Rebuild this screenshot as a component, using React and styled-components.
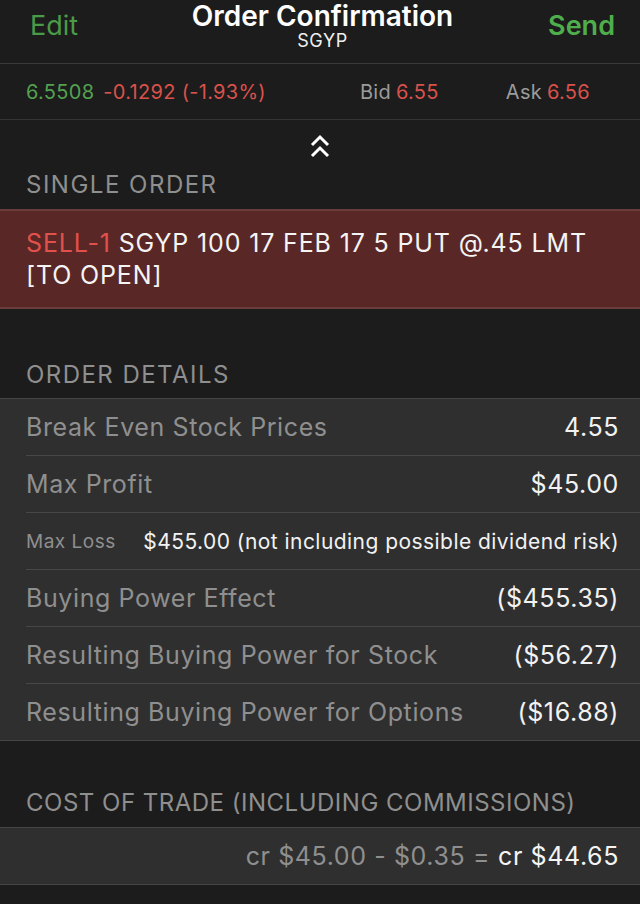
import React from 'react'
import styled, { createGlobalStyle } from 'styled-components'

const GlobalStyle = createGlobalStyle`
    html, body {
        margin: 0;
        padding: 0;
        background: #1c1c1c;
    }
    body {
        font-family: Inter, Roboto, "Liberation Sans", sans-serif;
        -webkit-font-smoothing: antialiased;
    }
`

const Screen = styled.div`
    width: 640px;
    min-height: 904px;
    background: #1c1c1c;
    color: #f2f2f2;
    overflow: hidden;
`

const NavBar = styled.div`
    height: 63px;
    display: grid;
    grid-template-columns: 1fr auto 1fr;
    align-items: start;
    padding: 0 25px 0 30px;
    border-bottom: 1px solid #3a3a3a;
`
const NavButton = styled.div`
    margin-top: 9px;
    font-size: 27px;
    font-weight: ${({ bold }) => (bold ? 600 : 400)};
    color: ${({ bold }) => (bold ? '#4fae4c' : '#4b9a48')};
    text-align: ${({ bold }) => (bold ? 'right' : 'left')};
`
const TitleBlock = styled.div`
    display: flex;
    flex-direction: column;
    align-items: center;
    padding-top: 1px;
`
const Title = styled.div`
    font-size: 28px;
    font-weight: 600;
    color: #ffffff;
    line-height: 30px;
`
const Subtitle = styled.div`
    font-size: 18px;
    color: #f0f0f0;
    line-height: 20px;
    letter-spacing: 0.6px;
`

const QuoteBar = styled.div`
    height: 55px;
    display: flex;
    align-items: center;
    padding: 0 50px 0 26px;
    font-size: 20px;
    letter-spacing: 0.3px;
    border-bottom: 1px solid #333;
`
const Last = styled.span`
    color: #53a150;
    margin-right: 9px;
`
const Change = styled.span`
    color: #d9514b;
    flex: 1;
`
const Quote = styled.span`
    color: #9b9b9b;
    margin-left: ${({ gap }) => gap || 0}px;
    span {
        color: #d9514b;
        margin-left: 5px;
    }
`

const Collapse = styled.div`
    display: flex;
    justify-content: center;
    padding-top: 14px;
    height: 25px;
`

const SectionTitle = styled.div`
    font-size: 24px;
    color: #8f8f8f;
    padding: ${({ top }) => top}px 26px ${({ bottom }) => bottom}px;
    line-height: 30px;
    letter-spacing: ${({ tracking }) => tracking}px;
`

const OrderBox = styled.div`
    background: #5a2727;
    border-top: 2px solid #6b3c3c;
    border-bottom: 2px solid #6b3c3c;
    padding: 16px 26px;
    font-size: 25px;
    line-height: 32px;
    letter-spacing: 0.85px;
    color: #f4f4f4;
`
const Sell = styled.span`
    color: #e0514b;
`

const Card = styled.div`
    background: #2f2f2f;
    border-top: 1px solid #454545;
    border-bottom: 1px solid #454545;
`
const Row = styled.div`
    height: 56px;
    display: flex;
    align-items: center;
    justify-content: space-between;
    margin-left: 26px;
    padding-right: 21px;
    border-bottom: ${({ last }) => (last ? 'none' : '1px solid #474747')};
`
const Label = styled.div`
    font-size: ${({ small }) => (small ? 19 : 25)}px;
    letter-spacing: ${({ small }) => (small ? 0.5 : 0.6)}px;
    color: #8f8f8f;
`
const Value = styled.div`
    font-size: ${({ small }) => (small ? 21 : 25)}px;
    letter-spacing: ${({ small }) => (small ? 0.45 : 0.6)}px;
    color: #f2f2f2;
`

const CostRow = styled.div`
    height: 56px;
    display: flex;
    align-items: center;
    justify-content: flex-end;
    padding-right: 21px;
    font-size: 25px;
    letter-spacing: 0.6px;
    background: #2f2f2f;
    border-top: 1px solid #454545;
    border-bottom: 1px solid #454545;
    color: #8f8f8f;
    span {
        color: #f4f4f4;
        margin-left: 8px;
    }
`

const details = [
    { label: 'Break Even Stock Prices', value: '4.55' },
    { label: 'Max Profit', value: '$45.00' },
    { label: 'Max Loss', value: '$455.00 (not including possible dividend risk)', small: true },
    { label: 'Buying Power Effect', value: '($455.35)' },
    { label: 'Resulting Buying Power for Stock', value: '($56.27)' },
    { label: 'Resulting Buying Power for Options', value: '($16.88)' },
]

const DoubleChevron = () => (
    <svg width="22" height="26" viewBox="0 0 22 26">
        <path d="M3 11 L11 3 L19 11" fill="none" stroke="#fff" strokeWidth="3" />
        <path d="M3 22 L11 14 L19 22" fill="none" stroke="#fff" strokeWidth="3" />
    </svg>
)

const App = () => {
    return (
        <Screen>
            <GlobalStyle />
            <NavBar>
                <NavButton>Edit</NavButton>
                <TitleBlock>
                    <Title>Order Confirmation</Title>
                    <Subtitle>SGYP</Subtitle>
                </TitleBlock>
                <NavButton bold>Send</NavButton>
            </NavBar>

            <QuoteBar>
                <Last>6.5508</Last>
                <Change>-0.1292 (-1.93%)</Change>
                <Quote>Bid<span>6.55</span></Quote>
                <Quote gap={67}>Ask<span>6.56</span></Quote>
            </QuoteBar>

            <Collapse>
                <DoubleChevron />
            </Collapse>

            <SectionTitle top={11} bottom={9} tracking={1.5}>SINGLE ORDER</SectionTitle>
            <OrderBox>
                <Sell>SELL-1</Sell> SGYP 100 17 FEB 17 5 PUT @.45 LMT<br />[TO OPEN]
            </OrderBox>

            <SectionTitle top={51} bottom={8} tracking={1.45}>ORDER DETAILS</SectionTitle>
            <Card>
                {details.map((d, i) => (
                    <Row key={d.label} last={i === details.length - 1}>
                        <Label small={d.small}>{d.label}</Label>
                        <Value small={d.small}>{d.value}</Value>
                    </Row>
                ))}
            </Card>

            <SectionTitle top={47} bottom={9} tracking={0.5}>COST OF TRADE (INCLUDING COMMISSIONS)</SectionTitle>
            <CostRow>
                cr $45.00 - $0.35 =<span>cr $44.65</span>
            </CostRow>
        </Screen>
    )
}

export default App
